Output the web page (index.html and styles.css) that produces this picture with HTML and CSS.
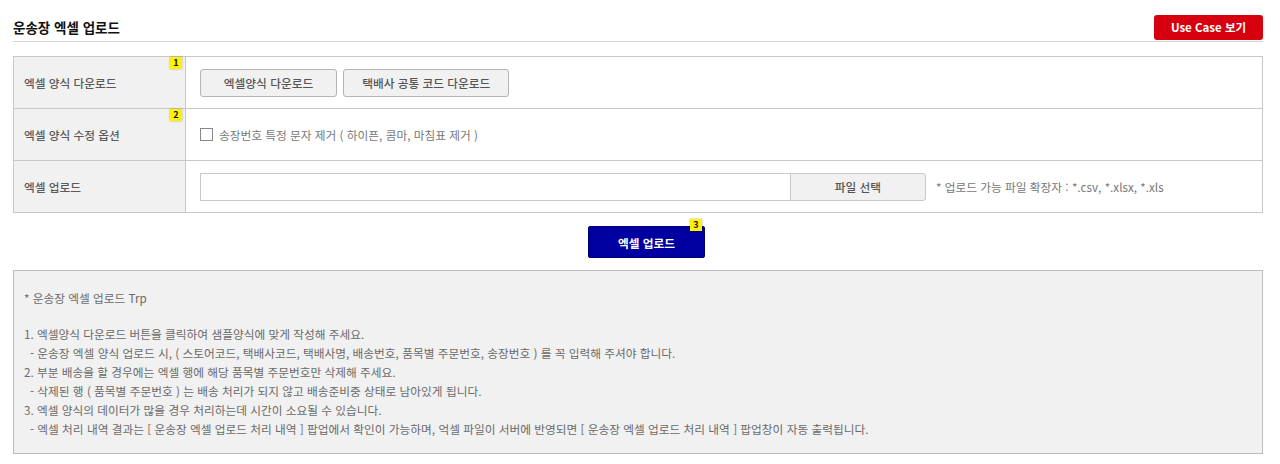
FILE: index.html
```html
<!DOCTYPE html>
<html lang="ko">
<head>
    <meta charset="UTF-8">
    <title>운송장 엑셀 업로드</title>
    <link rel="stylesheet" href="styles.css">
</head>
<body>
    <!-- Page Header -->
    <div class="page-head">
        <h2>운송장 엑셀 업로드</h2>
        <a href="#" class="btn-usecase">Use Case 보기</a>
    </div>

    <!-- Upload Form Table -->
    <table class="form-table">
        <tr>
            <th>엑셀 양식 다운로드<span class="badge">1</span></th>
            <td>
                <button class="btn-gray">엑셀양식 다운로드</button>
                <button class="btn-gray wide">택배사 공통 코드 다운로드</button>
            </td>
        </tr>
        <tr>
            <th>엑셀 양식 수정 옵션<span class="badge">2</span></th>
            <td>
                <label class="check"><input type="checkbox"> 송장번호 특정 문자 제거 ( 하이픈, 콤마, 마침표 제거 )</label>
            </td>
        </tr>
        <tr>
            <th>엑셀 업로드</th>
            <td>
                <div class="file-row">
                    <input type="text" class="file-name">
                    <button class="btn-file">파일 선택</button>
                    <span class="file-note">* 업로드 가능 파일 확장자 : *.csv, *.xlsx, *.xls</span>
                </div>
            </td>
        </tr>
    </table>

    <!-- Upload Button -->
    <div class="upload-wrap">
        <button class="btn-upload">엑셀 업로드<span class="badge">3</span></button>
    </div>

    <!-- Guide Box -->
    <div class="guide">
        <p class="guide-title">* 운송장 엑셀 업로드 Trp</p>
        <p>1. 엑셀양식 다운로드 버튼을 클릭하여 샘플양식에 맞게 작성해 주세요.</p>
        <p class="sub">- 운송장 엑셀 양식 업로드 시, ( 스토어코드, 택배사코드, 택배사명, 배송번호, 품목별 주문번호, 송장번호 ) 를 꼭 입력해 주셔야 합니다.</p>
        <p>2. 부분 배송을 할 경우에는 엑셀 행에 해당 품목별 주문번호만 삭제해 주세요.</p>
        <p class="sub">- 삭제된 행 ( 품목별 주문번호 ) 는 배송 처리가 되지 않고 배송준비중 상태로 남아있게 됩니다.</p>
        <p>3. 엑셀 양식의 데이터가 많을 경우 처리하는데 시간이 소요될 수 있습니다.</p>
        <p class="sub">- 엑셀 처리 내역 결과는 [ 운송장 엑셀 업로드 처리 내역 ] 팝업에서 확인이 가능하며, 억셀 파일이 서버에 반영되면 [ 운송장 엑셀 업로드 처리 내역 ] 팝업창이 자동 출력됩니다.</p>
    </div>
</body>
</html>
```

FILE: styles.css
```css
/* Reset */
* {
    box-sizing: border-box;
    margin: 0;
    padding: 0;
}
body {
    font-family: "Noto Sans CJK KR", "Noto Sans", sans-serif;
    font-size: 11.7px;
    color: #666;
    background: #fff;
    padding: 16px 17px 0 13px;
}

/* Header */
.page-head {
    display: flex;
    justify-content: space-between;
    align-items: flex-end;
    border-bottom: 1px solid #d6d6d6;
    height: 26px;
}
.page-head h2 {
    font-size: 13.5px;
    font-weight: bold;
    color: #111;
    line-height: 20px;
    padding-bottom: 4px;
}
.btn-usecase {
    display: block;
    width: 109px;
    height: 25px;
    line-height: 25px;
    margin-bottom: 1px;
    background-color: #d7000f;
    color: #fff;
    font-size: 11.5px;
    font-weight: bold;
    text-align: center;
    text-decoration: none;
    border-radius: 3px;
}

/* Form Table */
.form-table {
    width: 100%;
    margin-top: 14px;
    border-collapse: collapse;
    border: 1px solid #c8c8c8;
}
.form-table th,
.form-table td {
    border: 1px solid #c8c8c8;
    height: 52px;
    vertical-align: middle;
}
.form-table th {
    position: relative;
    width: 172px;
    padding-left: 10px;
    text-align: left;
    background-color: #f1f1f1;
    color: #5a5a5a;
    font-size: 11.7px;
    font-weight: 500;
}
.form-table td {
    padding-left: 14px;
}

/* Number Badges */
.badge {
    position: absolute;
    top: 0;
    right: 3px;
    width: 12px;
    height: 12px;
    line-height: 12px;
    background-color: #fff200;
    color: #111;
    font-size: 9px;
    font-weight: bold;
    text-align: center;
    box-shadow: 0 0 2px rgba(0, 0, 0, 0.3);
}

/* Buttons */
button {
    font-family: inherit;
    cursor: pointer;
}
.btn-gray {
    width: 137px;
    height: 28px;
    margin-right: 3px;
    background-color: #f1f1f1;
    border: 1px solid #b4b4b4;
    border-radius: 3px;
    color: #555;
    font-size: 11.7px;
    font-weight: 500;
    vertical-align: middle;
}
.btn-gray.wide {
    width: 166px;
}

/* Checkbox Option */
.check {
    display: flex;
    align-items: center;
    gap: 6px;
    color: #777;
    font-size: 11.7px;
}
.check input {
    appearance: none;
    width: 13px;
    height: 13px;
    border: 1px solid #888;
    background: #fff;
    margin: 0;
}

/* File Upload Row */
.file-row {
    display: flex;
    align-items: center;
}
.file-name {
    width: 590px;
    height: 28px;
    border: 1px solid #c8c8c8;
    border-right: none;
}
.btn-file {
    width: 136px;
    height: 28px;
    background-color: #f1f1f1;
    border: 1px solid #c8c8c8;
    border-radius: 0 3px 3px 0;
    color: #555;
    font-size: 11.7px;
    font-weight: 500;
}
.file-note {
    margin-left: 10px;
    color: #777;
}

/* Upload Button */
.upload-wrap {
    display: flex;
    justify-content: center;
    padding: 13px 0 12px 17px;
}
.btn-upload {
    position: relative;
    width: 117px;
    height: 32px;
    background-color: #0000a0;
    border: 1px solid #000070;
    border-radius: 2px;
    color: #fff;
    font-size: 11.7px;
    font-weight: bold;
}
.btn-upload .badge {
    top: -8px;
    right: 2px;
}

/* Guide Box */
.guide {
    background-color: #f1f1f1;
    border: 1px solid #bdbdbd;
    padding: 17px 10px 15px;
    color: #6a6a6a;
    font-size: 11.7px;
    line-height: 19px;
}
.guide-title {
    margin-bottom: 17px;
}
.guide .sub {
    padding-left: 6px;
}
```
